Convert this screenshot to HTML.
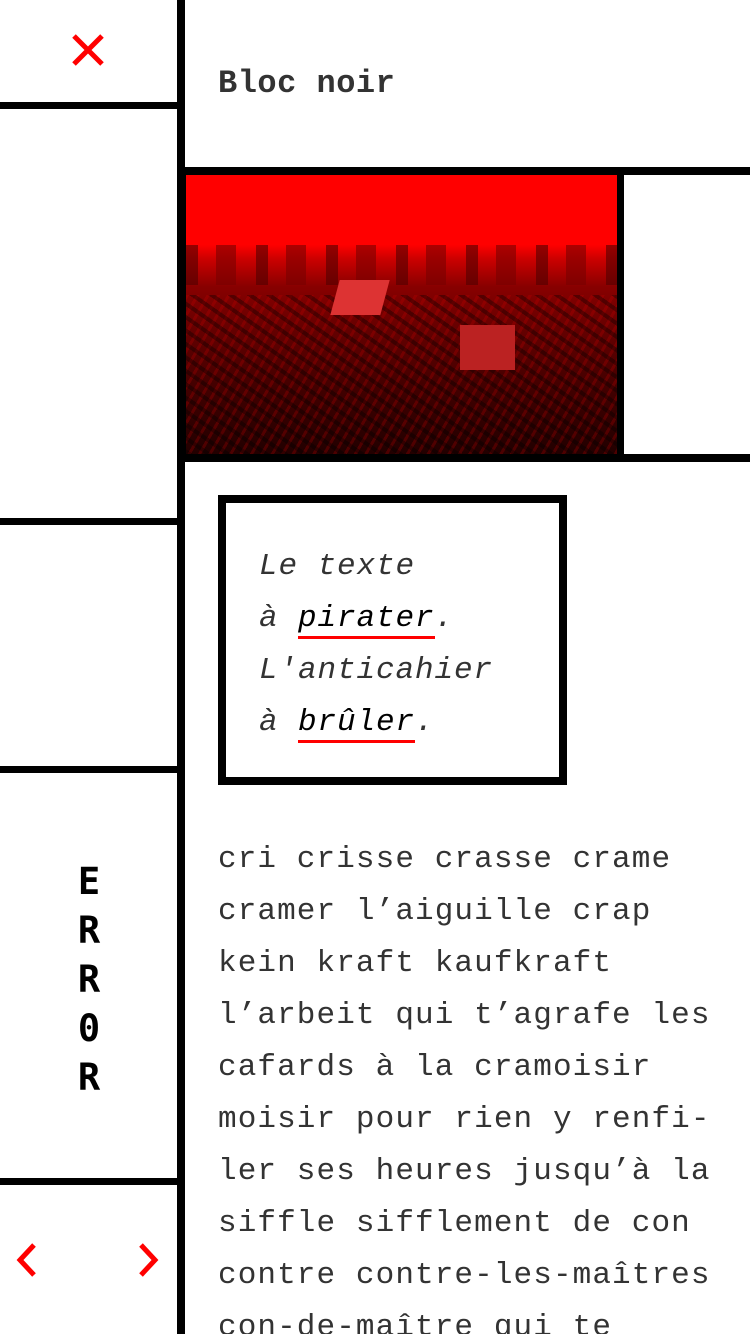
<!DOCTYPE html>
<html><head><meta charset="utf-8"><style>
*{margin:0;padding:0;box-sizing:border-box}
html,body{width:750px;height:1334px;overflow:hidden;background:#fff}
body{position:relative;font-family:"Liberation Mono",monospace;color:#333}
.b{position:absolute;background:#000}
.t{position:absolute;white-space:pre;font-size:31px;letter-spacing:1.1px}
u{text-decoration:none;border-bottom:3px solid #f00;color:#000;padding-bottom:0}
</style></head><body>
<div class="b" style="left:177px;top:0;width:8px;height:1334px"></div>
<div class="b" style="left:0;top:102px;width:177px;height:7px"></div>
<div class="b" style="left:0;top:518px;width:177px;height:7px"></div>
<div class="b" style="left:0;top:766px;width:177px;height:7px"></div>
<div class="b" style="left:0;top:1178px;width:177px;height:7px"></div>
<div class="b" style="left:185px;top:167px;width:565px;height:8px"></div>
<div class="b" style="left:185px;top:454px;width:565px;height:8px"></div>
<svg style="position:absolute;left:72px;top:34px" width="32" height="32"><path d="M2 2L30 30M30 2L2 30" stroke="#f00" stroke-width="5"/></svg>
<div style="position:absolute;left:218px;top:65px;font-size:32px;letter-spacing:0.5px;font-weight:bold;color:#333">Bloc noir</div>
<div style="position:absolute;left:185px;top:175px;width:439px;height:279px;background:#000">
<div style="position:absolute;left:1px;top:0;width:431px;height:279px;background:linear-gradient(#f00 0%,#f00 25%,#c00 30%,#800 40%,#600 55%,#400 75%,#200 100%)"></div>
<div style="position:absolute;left:1px;top:70px;width:431px;height:40px;background:repeating-linear-gradient(90deg,rgba(80,0,0,.6) 0 12px,transparent 12px 30px,rgba(120,0,0,.6) 30px 50px,transparent 50px 70px)"></div>
<div style="position:absolute;left:1px;top:120px;width:431px;height:159px;background:repeating-linear-gradient(35deg,rgba(0,0,0,.35) 0 4px,transparent 4px 11px),repeating-linear-gradient(-60deg,rgba(200,0,0,.25) 0 3px,transparent 3px 9px)"></div>
<div style="position:absolute;left:150px;top:105px;width:50px;height:35px;background:#d33;transform:skew(-15deg)"></div>
<div style="position:absolute;left:275px;top:150px;width:55px;height:45px;background:#b22"></div>
</div>
<div style="position:absolute;left:218px;top:495px;width:349px;height:290px;border:8px solid #000"></div>
<div class="t" style="left:259px;top:541px;line-height:52px;font-style:italic;letter-spacing:0.9px">Le texte
à <u>pirater</u>.
L'anticahier
à <u>brûler</u>.</div>
<div class="t" style="left:218px;top:834px;line-height:52px">cri crisse crasse crame
cramer l’aiguille crap
kein kraft kaufkraft
l’arbeit qui t’agrafe les
cafards à la cramoisir
moisir pour rien y renfi-
ler ses heures jusqu’à la
siffle sifflement de con
contre contre-les-maîtres
con-de-maître qui te</div>
<div style="position:absolute;left:70px;top:857px;width:38px;text-align:center;font-size:37px;font-weight:bold;line-height:49px;color:#000;font-family:'DejaVu Sans Mono',monospace">E<br>R<br>R<br>0<br>R</div>
<svg style="position:absolute;left:14px;top:1242px" width="26" height="36"><path d="M20 3L6 18L20 33" stroke="#f00" stroke-width="5" fill="none"/></svg>
<svg style="position:absolute;left:136px;top:1242px" width="26" height="36"><path d="M5 3L19 18L5 33" stroke="#f00" stroke-width="5" fill="none"/></svg>
</body></html>
